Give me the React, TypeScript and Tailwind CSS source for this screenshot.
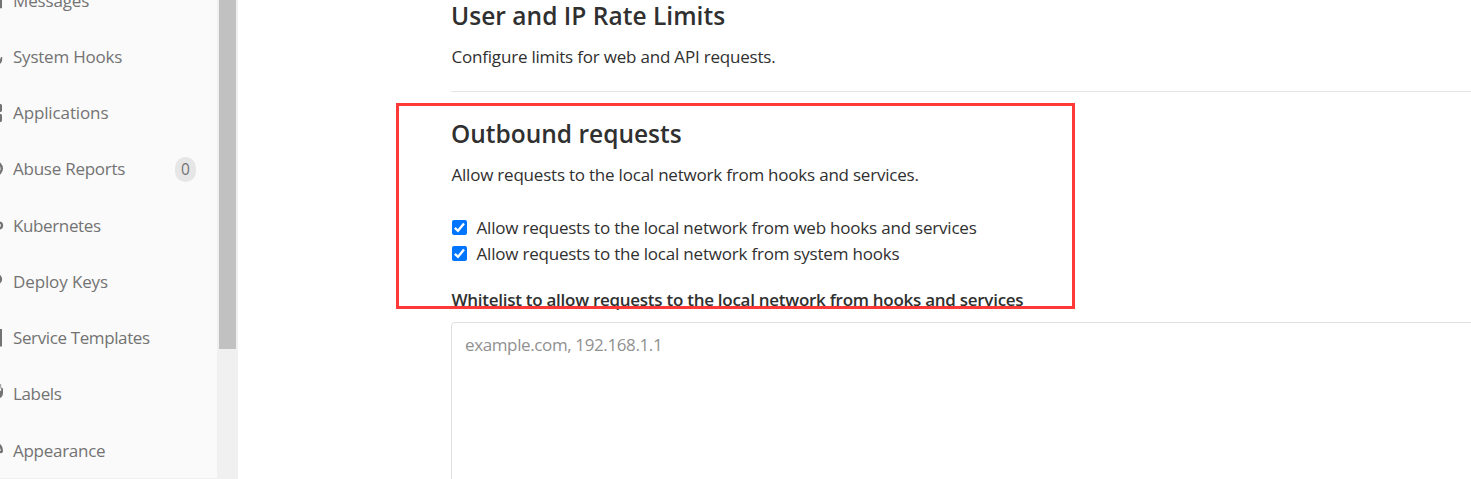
import type { ReactNode } from "react";

type NavItem = { label: string; tracking: string; icon: ReactNode; count?: number };

const navItems: NavItem[] = [
  { label: "Messages", tracking: "tracking-[-0.15px]", icon: <path d="M0 1h2v14.2H0z" /> },
  { label: "System Hooks", tracking: "tracking-[-0.22px]", icon: <path d="M0 10.400V15q2.200-1.600 2.200-4.800V8H1z" /> },
  {
    label: "Applications",
    tracking: "tracking-[-0.12px]",
    icon: <path d="M0 -1h.7Q2 -.8 2 .6v4.600Q2 6.600 .7 7H0zM0 9h.7Q2 9.300 2 10.600v4.600Q2 16.600 .7 17H0z" />,
  },
  {
    label: "Abuse Reports",
    tracking: "tracking-[-0.25px]",
    icon: <circle cx="-4.500" cy="7.600" r="6.300" fill="none" stroke="currentColor" strokeWidth="2.400" />,
    count: 0,
  },
  {
    label: "Kubernetes",
    tracking: "tracking-[-0.38px]",
    icon: <circle cx="-.9" cy="7.400" r="2.900" fill="none" stroke="currentColor" strokeWidth="2.300" />,
  },
  {
    label: "Deploy Keys",
    tracking: "tracking-[-0.12px]",
    icon: <circle cx="-3" cy="5.200" r="4" fill="none" stroke="currentColor" strokeWidth="2.300" />,
  },
  { label: "Service Templates", tracking: "tracking-[-0.38px]", icon: <path d="M0 -.9h2v17.400H0z" /> },
  {
    label: "Labels",
    tracking: "tracking-[-0.36px]",
    icon: (
      <>
        <path d="M0 -2h1.200v4.500H0z" opacity=".6" />
        <path d="M0 5.200l1.200-1V1.500L3 2.500v4Q3 10.600 0 12z" />
      </>
    ),
  },
  { label: "Appearance", tracking: "tracking-[-0.27px]", icon: <path d="M0 1Q3 3 3 8.600 2.500 10.600 0 10V7.800h1L0 5z" /> },
];

function Sidebar() {
  return (
    <aside className="flex h-[479px] w-[238px] shrink-0 overflow-hidden bg-[#f0f0f0]">
      <nav className="h-[478px] w-[217px] overflow-hidden bg-[#fafafa]">
        <ul className="-mt-[27.6px]">
          {navItems.map((item) => (
            <li key={item.label} className="flex h-[56.25px] items-center text-[17px] text-[#737373]">
              <svg viewBox="0 0 4 16" className="h-4 w-1 shrink-0 overflow-visible" fill="currentColor">
                {item.icon}
              </svg>
              <span className={`ml-[9px] grow whitespace-nowrap leading-6 ${item.tracking}`}>{item.label}</span>
              {item.count !== undefined && (
                <span className="mr-[21px] flex h-[25px] w-[21px] items-center justify-center rounded-full bg-[#e6e6e6] text-[15.5px] leading-6">
                  {item.count}
                </span>
              )}
            </li>
          ))}
        </ul>
      </nav>
      <div className="ml-[2px] h-[349px] w-[17px] bg-[#c1c1c1]" />
    </aside>
  );
}

function CheckRow({ label }: { label: string }) {
  return (
    <label className="flex h-[26px] items-center whitespace-nowrap">
      <svg viewBox="0 0 15 15" className="mr-[10px] h-[15px] w-[15px]">
        <rect width="15" height="15" rx="2" fill="#0075ff" />
        <path d="M2.800 7.800l3.200 3L12 3.600" fill="none" stroke="#fff" strokeWidth="2.400" />
      </svg>
      <span className="pt-0.5 tracking-[-0.208px]">{label}</span>
    </label>
  );
}

export default function App() {
  return (
    <div className="relative flex h-[479px] w-[1471px] overflow-hidden bg-white font-['Open_Sans',sans-serif] text-[17px] text-[#303030]">
      <Sidebar />
      <main className="ml-[213px] flex grow flex-col">
        <section className="h-[92px] shrink-0 border-b border-[#e5e5e5]">
          <h4 className="h-8 text-[24.5px] leading-8 font-semibold tracking-[0.03px]">User and IP Rate Limits</h4>
          <p className="mt-[13px] pl-[0.5px] leading-6 tracking-[-0.2px]">Configure limits for web and API requests.</p>
        </section>
        <section className="flex grow flex-col pt-[26px]">
          <h4 className="h-8 text-[24.5px] leading-8 font-semibold">Outbound requests</h4>
          <p className="mt-[13px] pl-[0.5px] leading-6 tracking-[-0.215px]">
            Allow requests to the local network from hooks and services.
          </p>
          <div className="mt-[27px] pl-[0.5px]">
            <CheckRow label="Allow requests to the local network from web hooks and services" />
            <CheckRow label="Allow requests to the local network from system hooks" />
          </div>
          <p className="mt-[22px] pl-[0.5px] leading-6 font-semibold tracking-[-0.27px]">
            Whitelist to allow requests to the local network from hooks and services
          </p>
          <textarea
            className="mt-[10px] block h-[200px] w-[1030px] shrink-0 resize-none rounded border border-[#dfdfdf] px-[13px] py-[10px] leading-6 tracking-[-0.38px] placeholder:text-[#919191]"
            placeholder="example.com, 192.168.1.1"
          />
        </section>
      </main>
      <div className="pointer-events-none absolute top-[103px] left-[396px] h-[206px] w-[679px] border-3 border-[#ff3838]" />
    </div>
  );
}
